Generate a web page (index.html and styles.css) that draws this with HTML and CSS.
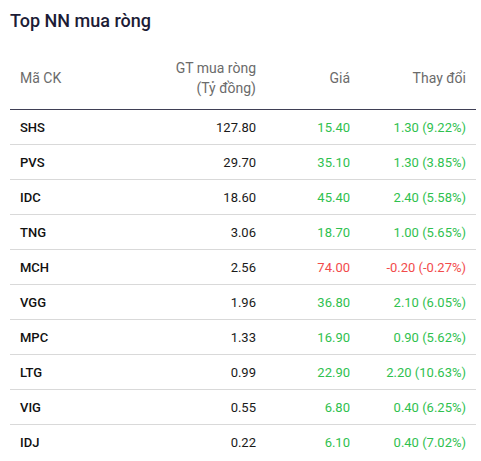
FILE: index.html
```html
<!DOCTYPE html>
<html>
<head>
<meta charset="utf-8">
<link rel="stylesheet" href="styles.css">
</head>
<body>
<div class="panel">
  <h2 class="title">Top NN mua ròng</h2>
  <table class="tbl">
    <thead>
      <tr>
        <th class="c1">Mã CK</th>
        <th class="c2">GT mua ròng<br>(Tỷ đồng)</th>
        <th class="c3">Giá</th>
        <th class="c4">Thay đổi</th>
      </tr>
    </thead>
    <tbody>
      <tr><td class="sym">SHS</td><td class="val">127.80</td><td class="up">15.40</td><td class="up">1.30 (9.22%)</td></tr>
      <tr><td class="sym">PVS</td><td class="val">29.70</td><td class="up">35.10</td><td class="up">1.30 (3.85%)</td></tr>
      <tr><td class="sym">IDC</td><td class="val">18.60</td><td class="up">45.40</td><td class="up">2.40 (5.58%)</td></tr>
      <tr><td class="sym">TNG</td><td class="val">3.06</td><td class="up">18.70</td><td class="up">1.00 (5.65%)</td></tr>
      <tr><td class="sym">MCH</td><td class="val">2.56</td><td class="down">74.00</td><td class="down">-0.20 (-0.27%)</td></tr>
      <tr><td class="sym">VGG</td><td class="val">1.96</td><td class="up">36.80</td><td class="up">2.10 (6.05%)</td></tr>
      <tr><td class="sym">MPC</td><td class="val">1.33</td><td class="up">16.90</td><td class="up">0.90 (5.62%)</td></tr>
      <tr><td class="sym">LTG</td><td class="val">0.99</td><td class="up">22.90</td><td class="up">2.20 (10.63%)</td></tr>
      <tr><td class="sym">VIG</td><td class="val">0.55</td><td class="up">6.80</td><td class="up">0.40 (6.25%)</td></tr>
      <tr><td class="sym">IDJ</td><td class="val">0.22</td><td class="up">6.10</td><td class="up">0.40 (7.02%)</td></tr>
    </tbody>
  </table>
</div>
</body>
</html>
```
FILE: styles.css
```css
html, body {
  margin: 0;
  padding: 0;
  background: #fff;
}
body {
  font-family: Roboto, "Liberation Sans", sans-serif;
}
.panel {
  padding: 0 5px 0 10px;
}
.title {
  margin: 0;
  padding-top: 9px;
  font-size: 18px;
  line-height: 24px;
  font-weight: 500;
  color: #1c1c36;
}
.tbl {
  width: 100%;
  border-collapse: collapse;
  margin-top: 18px;
  font-size: 13px;
}
.tbl th {
  font-weight: 400;
  font-size: 14px;
  line-height: 20px;
  color: #6b6b6b;
  padding: 7px 10px 11px;
  border-bottom: 1px solid #3f3f55;
  text-align: right;
  vertical-align: middle;
}
.tbl th.c1 { text-align: left; }
.c1 { width: 90px; }
.c3 { width: 74px; }
.c4 { width: 96px; }
.tbl td {
  height: 34px;
  padding: 0 10px;
  border-bottom: 1px solid #d9d9d9;
  text-align: right;
  color: #1a1a1a;
}
.tbl td.sym {
  text-align: left;
  font-weight: 500;
  color: #111;
}
.tbl td.up { color: #2fc14f; }
.tbl td.down { color: #f24b4b; }
.tbl tbody tr:last-child td { border-bottom: none; }
```
